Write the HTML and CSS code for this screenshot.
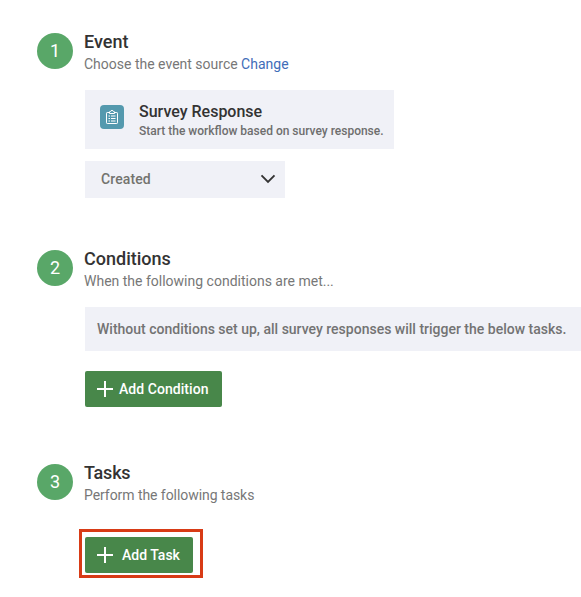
FILE: index.html
```html
<!DOCTYPE html>
<html lang="en">
<head>
<meta charset="utf-8">
<title>Workflow</title>
<link rel="stylesheet" href="styles.css">
</head>
<body>
<main class="workflow">
  <section class="step step-event">
    <div class="number">1</div>
    <div class="content">
      <h2>Event</h2>
      <p class="hint">Choose the event source <a class="link">Change</a></p>
      <div class="source">
        <div class="source-icon">
          <svg width="24" height="24" viewBox="0 0 24 24" fill="none" stroke="#fff">
            <path d="M9 7.5H7.2Q6.5 7.5 6.5 8.2V17.8Q6.5 18.5 7.2 18.5H16.8Q17.5 18.5 17.5 17.8V8.2Q17.5 7.5 16.8 7.5H15"/>
            <path d="M9.5 8.5V7Q9.5 6.5 10 6.5H10.6Q10.8 5.4 12 5.4T13.4 6.5H14Q14.5 6.5 14.5 7V8.5Z"/>
            <path d="M8.5 11H10M11 11H15.5M8.5 13.5H10M11 13.5H15.5M8.5 16H10M11 16H15.5"/>
          </svg>
        </div>
        <div class="source-text">
          <h3>Survey Response</h3>
          <p>Start the workflow based on survey response.</p>
        </div>
      </div>
      <div class="select">
        <span>Created</span>
        <svg width="16" height="10" viewBox="0 0 16 10" fill="none" stroke="#333" stroke-width="1.9"><path d="M1.5 1.3L8 7.8L14.5 1.3"/></svg>
      </div>
    </div>
  </section>
  <section class="step step-conditions">
    <div class="number">2</div>
    <div class="content">
      <h2>Conditions</h2>
      <p class="hint">When the following conditions are met...</p>
      <div class="notice">Without conditions set up, all survey responses will trigger the below tasks.</div>
      <button class="button add-condition">
        <svg width="16" height="16" viewBox="0 0 16 16" stroke="#fff" stroke-width="2"><path d="M8 0V16M0 8H16"/></svg>
        <span>Add Condition</span>
      </button>
    </div>
  </section>
  <section class="step step-tasks">
    <div class="number">3</div>
    <div class="content">
      <h2>Tasks</h2>
      <p class="hint">Perform the following tasks</p>
      <div class="highlight">
        <button class="button add-task">
          <svg width="16" height="16" viewBox="0 0 16 16" stroke="#fff" stroke-width="2"><path d="M8 0V16M0 8H16"/></svg>
          <span>Add Task</span>
        </button>
      </div>
    </div>
  </section>
</main>
</body>
</html>
```
FILE: styles.css
```css
* { box-sizing: border-box; }
body {
  margin: 0;
  background: #fff;
  color: #333;
  font-family: Roboto, "Liberation Sans", sans-serif;
  overflow: hidden;
}
h2, h3, p { margin: 0; white-space: nowrap; }
.workflow { padding: 33px 0 0 37px; }
.step { display: flex; gap: 12px; }
.step-event { height: 217px; }
.step-conditions { height: 214px; }
.number {
  flex: none;
  width: 36px;
  height: 36px;
  border-radius: 50%;
  background: #59a768;
  color: #fff;
  font-size: 18px;
  font-weight: 400;
  line-height: 36px;
  text-align: center;
}
.content { flex: 1; min-width: 0; }
h2 { height: 20px; margin-left: -1px; font-size: 18px; line-height: 17px; font-weight: 500; }
.step-tasks h2 { letter-spacing: -0.2px; }
.hint { height: 37px; margin-left: -1px; font-size: 14px; line-height: 22px; color: #777; }
.step-tasks .hint { letter-spacing: -0.06px; }
.link { color: #3f6db8; }
.source {
  display: flex;
  gap: 15px;
  width: 309px;
  height: 59px;
  padding: 15px 0 0 15px;
  background: #f0f1f7;
}
.source-icon {
  width: 24px;
  height: 24px;
  border-radius: 4px;
  background: #5499ae;
}
.source-icon svg { display: block; }
.source-text { margin-top: -4px; }
.source-text h3 { font-size: 16px; line-height: 21px; font-weight: 500; }
.source-text p { font-size: 12px; line-height: 19px; font-weight: 500; color: #6e6e6e; }
.select {
  display: flex;
  align-items: center;
  justify-content: space-between;
  width: 200px;
  height: 37px;
  margin-top: 12px;
  padding: 0 9px 2px 16px;
  background: #f0f1f7;
  color: #73736e;
  font-size: 14px;
  font-weight: 500;
  letter-spacing: 0.1px;
}
.notice {
  height: 44px;
  padding-left: 12px;
  background: #f0f1f7;
  color: #737373;
  font-size: 14px;
  font-weight: 500;
  line-height: 44px;
  white-space: nowrap;
}
.button {
  display: flex;
  align-items: center;
  height: 36px;
  padding: 0 12px;
  border: 0;
  border-radius: 2px;
  background: #48874a;
  color: #fff;
  font: 500 14px/36px Roboto, "Liberation Sans", sans-serif;
  white-space: nowrap;
}
.button svg { flex: none; }
.add-condition { width: 137px; gap: 6px; margin-top: 20px; letter-spacing: 0.05px; }
.add-task { width: 108px; gap: 9px; }
.highlight {
  width: 124px;
  height: 49px;
  margin: 8px 0 0 -6px;
  padding: 5px 3px;
  border: 3px solid #d83b16;
}
```
